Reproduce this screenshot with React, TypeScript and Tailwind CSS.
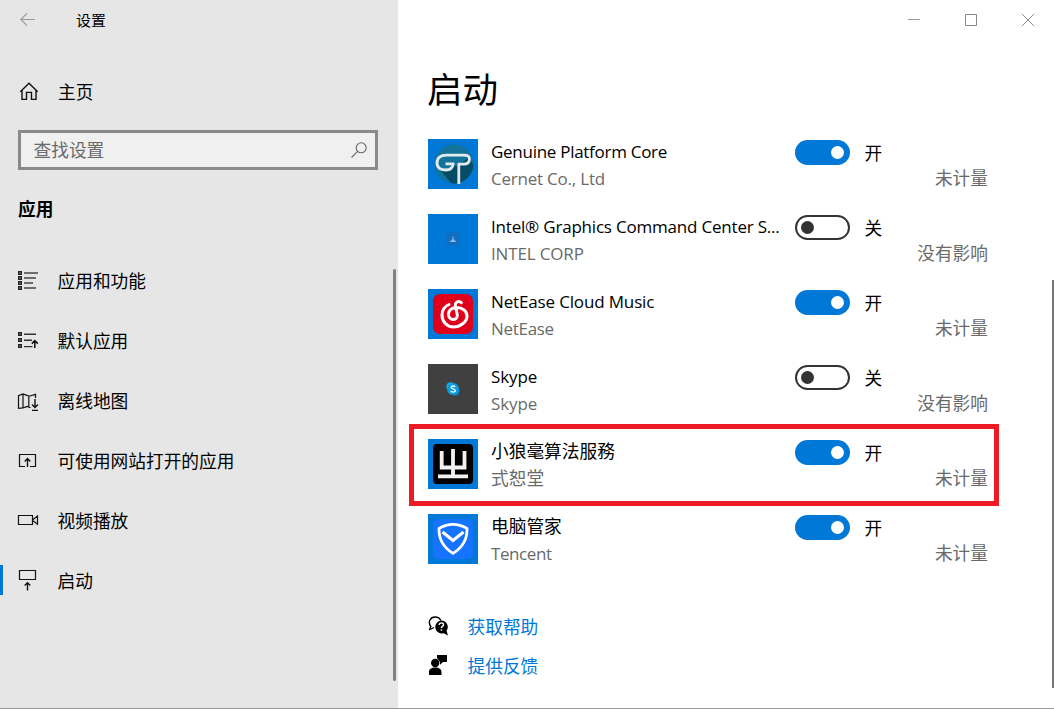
import type { ReactNode } from "react";

type IconProps = { children: ReactNode; className?: string };

function NavGlyph({ children, className = "" }: IconProps) {
  return (
    <svg
      viewBox="0 0 22 22"
      fill="none"
      stroke="#111"
      strokeWidth="1.2"
      className={`h-[22px] w-[22px] shrink-0 ${className}`}
    >
      {children}
    </svg>
  );
}

const bullet = (y: number) => <rect key={y} x="1.75" y={y} width="2.5" height="2.5" strokeWidth="1.5" stroke="#222" />;

const navItems: { label: string; icon: ReactNode; active?: boolean }[] = [
  {
    label: "应用和功能",
    icon: (
      <NavGlyph>
        {[1.75, 6.75, 11.75, 16.75].map(bullet)}
        <path d="M7 3h14M7 8h12M7 13h9M7 18h12" stroke="#444" strokeWidth="1.4" />
      </NavGlyph>
    ),
  },
  {
    label: "默认应用",
    icon: (
      <NavGlyph>
        {[2.75, 8.75, 14.75].map(bullet)}
        <path d="M7 4.2h12M7 10.2h8M7 16.6h8.5" stroke="#333" strokeWidth="1.4" />
        <path d="M17.8 18v-7M14.8 13.6l3-3 3 3" strokeWidth="1.5" />
      </NavGlyph>
    ),
  },
  {
    label: "离线地图",
    icon: (
      <NavGlyph>
        <path d="M13.5 17.8l-3-1.3-4.5 1.3-4.5.5V5.6L6 4l4.5 1.6L13 6l5.5-1.6V8M6 4v13.5M11.8 5.5v11.5" />
        <path d="M18 9v8.5M15 14.5l3 3 3-3M15 20.4h6" strokeWidth="1.4" />
      </NavGlyph>
    ),
  },
  {
    label: "可使用网站打开的应用",
    icon: (
      <NavGlyph>
        <path d="M8 16.5H2.5v-12h16v12H13" />
        <path d="M10.5 17V8.6M7.7 11.4l2.8-2.8 2.8 2.8" strokeWidth="1.4" />
      </NavGlyph>
    ),
  },
  {
    label: "视频播放",
    icon: (
      <NavGlyph>
        <path d="M1.5 5.5h14v9h-14zM15.5 10l5-4v8.2l-5-4" />
      </NavGlyph>
    ),
  },
  {
    label: "启动",
    active: true,
    icon: (
      <NavGlyph>
        <path d="M2.5 .5h16v9h-16z" />
        <path d="M10.5 20.5v-8M7.7 15.5l2.8-2.8 2.8 2.8" strokeWidth="1.4" />
      </NavGlyph>
    ),
  },
];

function GenuineLogo() {
  return (
    <svg viewBox="0 0 50 50" className="h-full w-full">
      <circle cx="26" cy="25" r="19.5" fill="#12739b" />
      <path d="M12 31l11 13c3 .8 6 .8 9-.3C39 41 45 35 45.3 25.5L40 18.5l-9 9-5-1-3 4.5z" fill="#064c66" />
      <path
        d="M17.5 24.8h7.8c-.7 4.3-3 6.2-7.300 6.200-5.400 0-9-2.300-9-7 0-5 3.500-7.900 9.300-7.900h17.500c3.500 0 5.600 1.300 5.600 3.800 0 3-2 5.200-5.600 5.200h-5V45"
        fill="none"
        stroke="#e3ebf1"
        strokeWidth="2.8"
        strokeLinejoin="round"
      />
    </svg>
  );
}

function IntelLogo() {
  return (
    <svg viewBox="0 0 50 50" className="h-full w-full">
      <rect x="18.5" y="18.5" width="13" height="13" fill="#126fc0" />
      <path d="M24.5 22.5h1v2.5l3 3h-7l3-3z" fill="#8abbe6" />
    </svg>
  );
}

function NetEaseLogo() {
  return (
    <svg viewBox="0 0 50 50" className="h-full w-full">
      <rect x="5" y="5" width="40" height="40" rx="7" fill="#e1001b" />
      <path
        d="M21 15.500c-4.500 2-7 5.500-7 10.500 0 6.800 5 12 11.500 12S39 33 39 27.200c0-5-4.500-8.700-10.300-8.700-5 0-8.200 3-8.200 6.700 0 3.200 2 5.300 4.700 5.300 3 0 4.800-2.400 4-5.400l-1.800-7.600c-.7-3 1.200-4.900 3.400-4.900 1.100 0 2 .5 2.600 1.100"
        fill="none"
        stroke="#fff"
        strokeWidth="3"
        strokeLinecap="round"
      />
    </svg>
  );
}

function SkypeLogo() {
  return (
    <svg viewBox="0 0 50 50" className="h-full w-full">
      <circle cx="22.7" cy="22.7" r="4.4" fill="#16b1ef" />
      <circle cx="27.3" cy="27.3" r="4.2" fill="#0a83d8" />
      <circle cx="25" cy="25" r="6" fill="#099be4" />
      <path
        d="M27.1 22.9c-.5-.7-1.2-.9-2-.9-1.2 0-2 .6-2 1.4 0 2 4.2 1 4.2 3.2 0 .9-.9 1.5-2.2 1.5-1 0-1.9-.4-2.3-1.1"
        fill="none"
        stroke="#fff"
        strokeWidth="1.3"
      />
    </svg>
  );
}

function WeaselLogo() {
  return (
    <svg viewBox="0 0 50 50" className="h-full w-full">
      <rect x="5" y="5" width="40" height="40" rx="4" fill="#000" />
      <path d="M13.7 12v16.5h22.8V12M25 10v28M10 37.3h30" fill="none" stroke="#f2f2f2" strokeWidth="3.8" />
    </svg>
  );
}

function TencentLogo() {
  return (
    <svg viewBox="0 0 50 50" className="h-full w-full">
      <rect x="5" y="5" width="40" height="40" rx="5" fill="#1673ff" />
      <path
        d="M25 10.4c5 0 9.5 1.5 14 4 .4 11-4.4 19-14 25-9.6-6-14.4-14-14-25 4.5-2.5 9-4 14-4z"
        fill="none"
        stroke="#fff"
        strokeWidth="2.8"
        strokeLinejoin="round"
      />
      <path d="M14.5 18l10.5 8.5 10.5-8.5" fill="none" stroke="#fff" strokeWidth="3" />
    </svg>
  );
}

type StartupApp = {
  name: string;
  nameClass: string;
  publisher: string;
  publisherClass: string;
  on: boolean;
  logo: ReactNode;
  dark?: boolean;
  highlighted?: boolean;
};

const apps: StartupApp[] = [
  { name: "Genuine Platform Core", nameClass: "text-[17px] tracking-[-0.28px]", publisher: "Cernet Co., Ltd", publisherClass: "text-[17px] tracking-[-0.22px]", on: true, logo: <GenuineLogo /> },
  { name: "Intel® Graphics Command Center S...", nameClass: "text-[17px] tracking-[-0.2px]", publisher: "INTEL CORP", publisherClass: "text-[17px] tracking-[-0.16px]", on: false, logo: <IntelLogo /> },
  { name: "NetEase Cloud Music", nameClass: "text-[17px] tracking-[-0.15px]", publisher: "NetEase", publisherClass: "text-[17px] tracking-[-0.3px]", on: true, logo: <NetEaseLogo /> },
  { name: "Skype", nameClass: "text-[17px] tracking-[-0.1px]", publisher: "Skype", publisherClass: "text-[17px] tracking-[-0.1px]", on: false, logo: <SkypeLogo />, dark: true },
  { name: "小狼毫算法服務", nameClass: "", publisher: "式恕堂", publisherClass: "", on: true, logo: <WeaselLogo />, highlighted: true },
  { name: "电脑管家", nameClass: "", publisher: "Tencent", publisherClass: "text-[17px] tracking-[-0.42px]", on: true, logo: <TencentLogo /> },
];

function Toggle({ on }: { on: boolean }) {
  return (
    <button
      role="switch"
      aria-checked={on}
      className={
        on
          ? "flex h-[25px] w-[55px] items-center justify-end rounded-full bg-[#0078d7] pr-[6px]"
          : "flex h-[25px] w-[55px] items-center justify-start rounded-full border-2 border-[#333] pl-1"
      }
    >
      <span className={on ? "h-[13px] w-[13px] rounded-full bg-white" : "h-[13px] w-[13px] rounded-full bg-[#333]"} />
    </button>
  );
}

function AppRow({ app }: { app: StartupApp }) {
  return (
    <li className="relative flex h-[75px] items-start">
      <div className={`h-[50px] w-[50px] shrink-0 ${app.dark ? "bg-[#404040]" : "bg-[#0078d7]"}`}>{app.logo}</div>
      <div className="-mt-px ml-[13px] w-[304px] whitespace-nowrap leading-[27px]">
        <div className={app.nameClass}>{app.name}</div>
        <div className={`text-[#6a6a6a] ${app.publisherClass}`}>{app.publisher}</div>
      </div>
      <div className="flex w-[193px] flex-col pt-px">
        <div className="flex h-[25px] items-center gap-[14.5px]">
          <Toggle on={app.on} />
          <span className="pt-px">{app.on ? "开" : "关"}</span>
        </div>
        <span className="self-end leading-[27px] text-[#6a6a6a]">{app.on ? "未计量" : "没有影响"}</span>
      </div>
      {app.highlighted && (
        <div className="pointer-events-none absolute -left-[19px] -top-[15px] h-[82px] w-[590px] border-[5px] border-[#ed1c24]" />
      )}
    </li>
  );
}

function Sidebar() {
  return (
    <aside className="flex w-[398px] shrink-0 bg-[#e6e6e6]">
      <div className="flex w-[393px] flex-col">
        <div className="flex h-10 items-center pl-5">
          <svg viewBox="0 0 16 14" fill="none" stroke="#999" strokeWidth="1.1" className="h-[14px] w-4">
            <path d="M15 6.5H.8M7 .3L.8 6.5 7 12.7" />
          </svg>
          <h1 className="ml-[40px] text-[14.9px]">设置</h1>
        </div>
        <a className="mt-[36px] flex h-[30px] items-center pl-[19px]">
          <svg viewBox="0 0 20 20" fill="none" stroke="#111" strokeWidth="1.4" className="h-5 w-5">
            <path d="M1.3 10.7L10 2.300l8.700 8.400M3 9.500v8.900h4.500v-7h5v7H17V9.500" />
          </svg>
          <span className="ml-[19px] pt-px">主页</span>
        </a>
        <div className="ml-[18px] mt-[24px] flex h-10 w-[360px] items-center justify-between border-[3px] border-[#8a8a8a] bg-[#f0f0f0] pl-[12.5px] pr-[8px] text-[#6a6a6a]">
          <span>查找设置</span>
          <svg viewBox="0 0 16 16" fill="none" stroke="#666" strokeWidth="1.1" className="h-4 w-4">
            <circle cx="10.2" cy="5.8" r="5" />
            <path d="M6.6 9.4L.5 15.5" />
          </svg>
        </div>
        <h2 className="mt-[24px] pl-[18px] font-bold leading-[30px]">应用</h2>
        <nav className="mt-[26px]">
          {navItems.map((item) => (
            <a key={item.label} className="flex h-[60px] items-center">
              <span className={`h-[30px] w-[3px] ${item.active ? "bg-[#0078d7]" : ""}`} />
              <span className="ml-[14px] h-[22px] translate-y-px">{item.icon}</span>
              <span className="ml-[18.5px] pt-[2px]">{item.label}</span>
            </a>
          ))}
        </nav>
      </div>
      <div className="mt-[269px] h-[412px] w-[3px] rounded-full bg-[#828282]" />
    </aside>
  );
}

export default function App() {
  return (
    <div className="flex h-[709px] w-[1054px] overflow-hidden border-b border-[#999] bg-white font-['Open_Sans','Noto_Sans_CJK_SC',sans-serif] text-[17.7px] font-normal leading-[26px] text-black">
      <Sidebar />
      <main className="flex flex-1 flex-col">
        <div className="flex h-10 items-center justify-end gap-[45px] pr-[18px]">
          <svg viewBox="0 0 12 12" className="h-3 w-3" stroke="#999"><path d="M0 5.5h12" /></svg>
          <svg viewBox="0 0 12 12" className="h-3 w-3" stroke="#888" fill="none"><path d="M.5.5h11v11H.5z" /></svg>
          <svg viewBox="0 0 12 12" className="h-3 w-3" stroke="#888"><path d="M0 0l12 12M12 0L0 12" /></svg>
        </div>
        <h2 className="mt-[24px] pl-[29px] text-[35.5px] leading-[50px]">启动</h2>
        <ul className="mt-[25px] pl-[30px]">
          {apps.map((app) => (
            <AppRow key={app.name} app={app} />
          ))}
        </ul>
        <div className="mt-[17px] flex flex-col pl-[30px] text-[#0078d7]">
          <a className="flex h-[39px] items-center">
            <svg viewBox="0 0 20 20" className="h-5 w-5">
              <path d="M1.5 13.5l1.3-3C-.5 6 2.5 1 7 1c3 0 5 1.5 5.8 3.5" fill="none" stroke="#000" strokeWidth="1.4" />
              <path d="M1 14l5-2.5" stroke="#000" strokeWidth="1.3" />
              <path d="M13.3 4.5a6.5 6.5 0 015.3 10.2l1.4 4.7-4.3-2.2A6.5 6.5 0 1113.3 4.5z" />
              <path d="M11.2 9c0-3 4.6-2.7 4.3-.2-.2 1.7-2.1 1.4-2.1 3.3M13.4 13.3v1.5" fill="none" stroke="#fff" strokeWidth="1.4" />
            </svg>
            <span className="ml-[19.5px] pt-[2px]">获取帮助</span>
          </a>
          <a className="flex h-[39px] items-center">
            <svg viewBox="0 0 20 20" className="h-5 w-5">
              <circle cx="7.2" cy="8" r="4.2" />
              <path d="M1 20v-3c0-3 2.5-4.5 6.2-4.5s6.3 1.5 6.3 4.5v3zM9 0h10v7h-4l-3 2.7V7L9 3z" />
            </svg>
            <span className="ml-[19.5px] pt-[2px]">提供反馈</span>
          </a>
        </div>
      </main>
      <div className="mt-[280px] h-[408px] w-[2px] bg-[#777]" />
    </div>
  );
}
